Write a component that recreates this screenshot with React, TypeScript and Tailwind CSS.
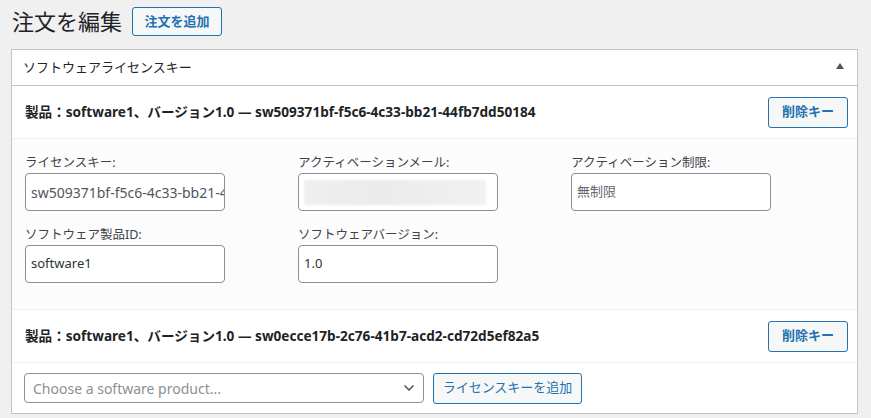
import { ChevronDown } from "lucide-react";

const FONT = "font-['Noto_Sans','Noto_Sans_CJK_JP',sans-serif]";

const deleteBtn =
  "h-[31px] w-[80px] rounded-[3px] border border-[#2271b1] bg-[#f6f7f7] text-[13px] font-semibold text-[#2271b1]";

function Field({
  label,
  children,
}: {
  label: string;
  children: React.ReactNode;
}) {
  return (
    <div className="flex flex-col">
      <label className="h-[20px] text-[12.5px] leading-[20px] text-[#3c434a]">
        {label}
      </label>
      {children}
    </div>
  );
}

const inputCls =
  "flex h-[38px] w-[200px] items-center overflow-hidden whitespace-nowrap rounded-[4px] border border-[#8c8f94] bg-white px-[5px]";

function KeyRow({ text }: { text: string }) {
  return (
    <div className="flex h-[52px] items-center justify-between pl-[13px] pr-[9px]">
      <span className="text-[13.6px] font-bold text-[#1d2327]">{text}</span>
      <button type="button" className={deleteBtn}>
        削除キー
      </button>
    </div>
  );
}

export default function App() {
  return (
    <div className={`min-h-screen bg-[#f0f0f1] ${FONT}`}>
      {/* page title */}
      <div className="flex h-[49px] items-start gap-[10px] pl-[12px] pt-[7px]">
        <h1 className="text-[22px] leading-[29px] text-[#1d2327]">
          注文を編集
        </h1>
        <button
          type="button"
          className="h-[29px] w-[90px] rounded-[3px] border border-[#2271b1] bg-[#f6f7f7] text-[13px] font-semibold text-[#2271b1]"
        >
          注文を追加
        </button>
      </div>

      {/* license key box */}
      <div className="ml-[11px] w-[847px] border border-[#c3c4c7] bg-white">
        <div className="flex h-[36px] items-center justify-between border-b border-[#c3c4c7] pl-[11px] pr-[13px]">
          <h2 className="text-[13px] text-[#1d2327]">ソフトウェアライセンスキー</h2>
          <svg width="8" height="6" viewBox="0 0 8 6" className="mb-[3px]">
            <path d="M4 0 L8 6 L0 6 Z" fill="#50575e" />
          </svg>
        </div>

        <KeyRow text="製品：software1、バージョン1.0 — sw509371bf-f5c6-4c33-bb21-44fb7dd50184" />

        <div className="border-y border-[#f0f0f1] bg-[#fcfcfc] px-[13px] pb-[26px] pt-[14px]">
          <div className="grid grid-cols-[200px_200px_200px] gap-x-[73px] gap-y-[14px]">
            <Field label="ライセンスキー:">
              <div className={`${inputCls} text-[14px] text-[#50575e]`}>
                sw509371bf-f5c6-4c33-bb21-44fb7dd50184
              </div>
            </Field>
            <Field label="アクティベーションメール:">
              <div className={`${inputCls} px-[1px]`}>
                <div className="h-[25px] w-[182px] bg-[linear-gradient(90deg,#efefef,#ebebeb_40%,#eeeeee_70%,#f1f1f1)] blur-[1px]" />
              </div>
            </Field>
            <Field label="アクティベーション制限:">
              <div className={`${inputCls} text-[13px] text-[#646970]`}>無制限</div>
            </Field>
            <Field label="ソフトウェア製品ID:">
              <div className={`${inputCls} text-[13px] text-[#2c3338]`}>software1</div>
            </Field>
            <Field label="ソフトウェアバージョン:">
              <div className={`${inputCls} text-[13px] text-[#2c3338]`}>1.0</div>
            </Field>
          </div>
        </div>

        <KeyRow text="製品：software1、バージョン1.0 — sw0ecce17b-2c76-41b7-acd2-cd72d5ef82a5" />

        <div className="flex h-[51px] items-center gap-[9px] border-t border-[#f0f0f1] pl-[12px]">
          <div className="flex h-[30px] w-[400px] items-center justify-between rounded-[4px] border border-[#8c8f94] bg-white pl-[8px] pr-[6px] text-[14px] text-[#8c8f94]">
            <span>Choose a software product...</span>
            <ChevronDown className="h-[16px] w-[16px] text-[#50575e]" strokeWidth={2.5} />
          </div>
          <button
            type="button"
            className="h-[31px] w-[149px] rounded-[3px] border border-[#2271b1] bg-[#f6f7f7] text-[13px] text-[#2271b1]"
          >
            ライセンスキーを追加
          </button>
        </div>
      </div>
    </div>
  );
}
